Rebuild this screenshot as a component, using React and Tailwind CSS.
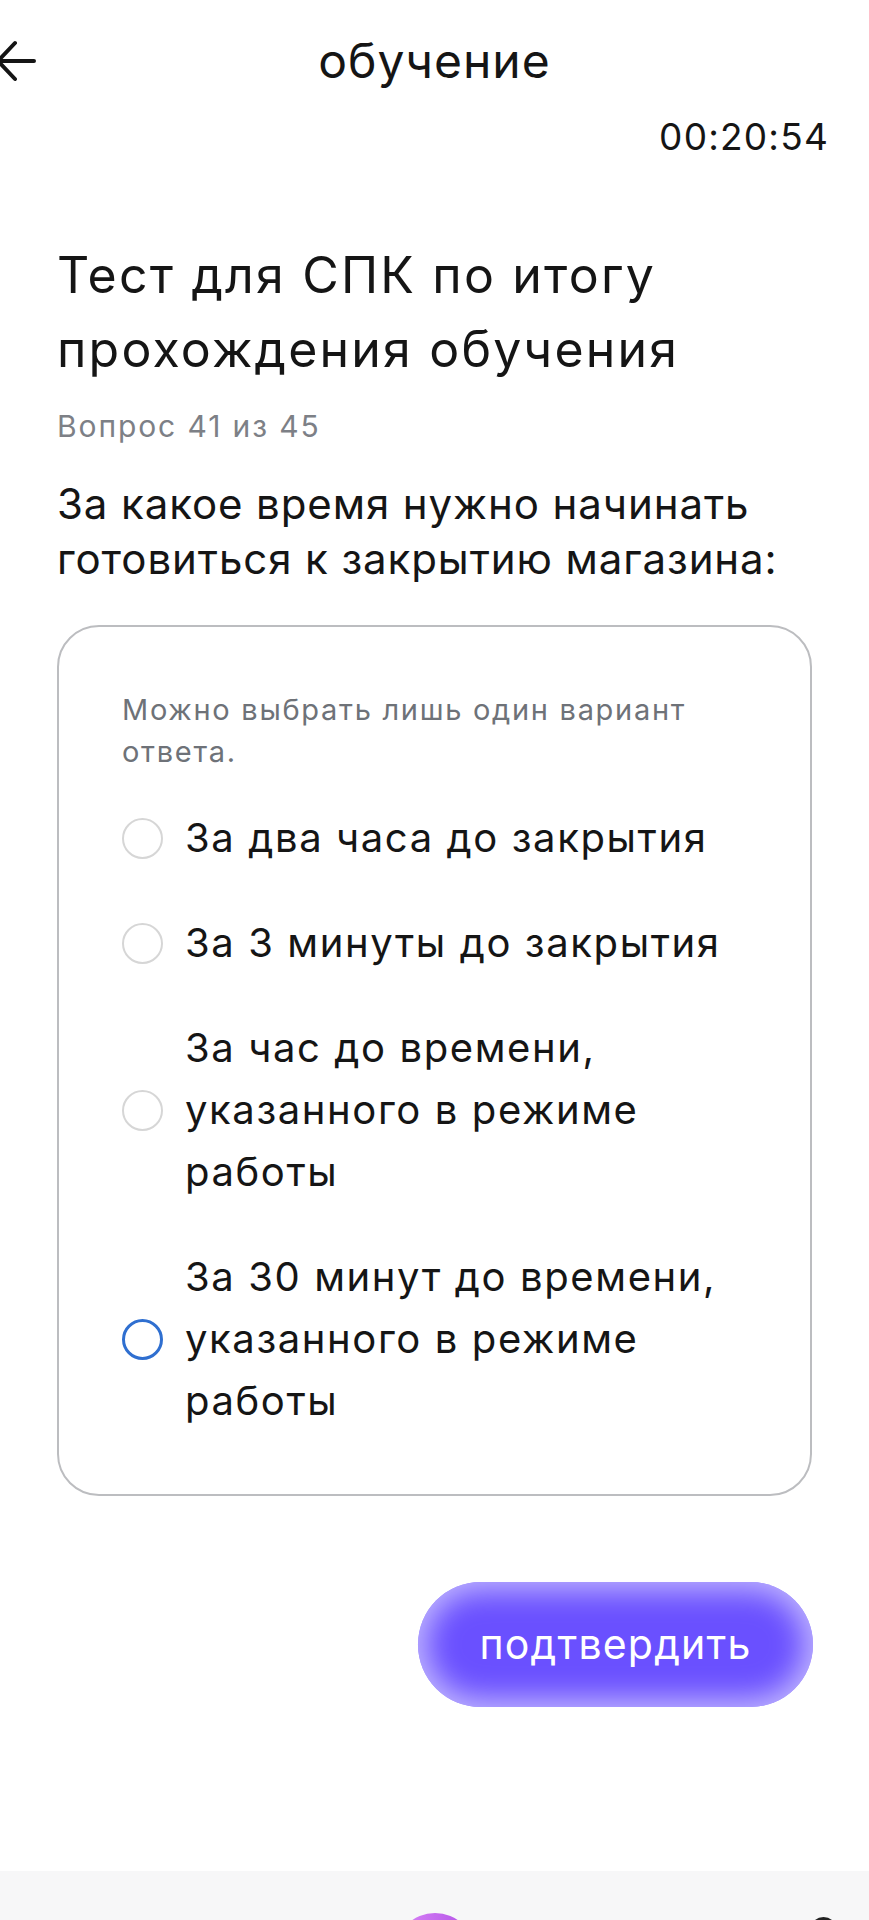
import React from "react";

const font = { fontFamily: "Inter, 'Noto Sans', sans-serif" };

function Radio({ selected }) {
  return (
    <span
      className={
        "shrink-0 w-[41px] h-[41px] rounded-full bg-white " +
        (selected ? "border-[3px] border-[#2f6fd0]" : "border-[2.5px] border-[#d6d6d6]")
      }
    />
  );
}

function Option({ lines, selected }) {
  return (
    <div className="flex items-center gap-[22px]">
      <Radio selected={selected} />
      <div className="text-[40px] leading-[62px] text-[#151515] tracking-[1.6px]">
        {lines.map((l, i) => (
          <div key={i} className="whitespace-nowrap">{l}</div>
        ))}
      </div>
    </div>
  );
}

export default function App() {
  return (
    <div className="w-full h-[1920px] bg-white overflow-hidden flex flex-col" style={font}>
      {/* header */}
      <div className="mt-[33px] h-[56px] grid grid-cols-[1fr_auto_1fr] items-center">
        <div className="flex items-center">
          <svg width="40" height="44" viewBox="-4 0 40 44" className="-ml-[4px]" fill="none">
            <path d="M34 22H-1M15 4L-2 22L15 40" stroke="#151515" strokeWidth="4" strokeLinecap="round" strokeLinejoin="round" />
          </svg>
        </div>
        <div className="text-[48px] leading-[56px] text-[#151515] tracking-[1px]">обучение</div>
        <div />
      </div>

      {/* timer */}
      <div className="mt-[28px] h-[40px] flex justify-end pr-[40px]">
        <span className="text-[37px] leading-[40px] text-[#151515] tracking-[1.2px]">00:20:54</span>
      </div>

      {/* title */}
      <div className="mt-[81px] px-[57px] text-[50px] leading-[74px] text-[#151515] tracking-[2.2px] whitespace-nowrap">
        Тест для СПК по итогу
        <br />
        прохождения обучения
      </div>

      <div className="mt-[22px] px-[57px] text-[30px] leading-[36px] text-[#7d8086] tracking-[1.9px]">Вопрос 41 из 45</div>

      <div className="mt-[32px] px-[57px] text-[42px] leading-[55px] text-[#151515] tracking-[0.9px] whitespace-nowrap">
        За какое время нужно начинать
        <br />
        готовиться к закрытию магазина:
      </div>

      {/* card */}
      <div className="mt-[39px] mx-[57px] border-2 border-[#bcbdc0] rounded-[42px] pt-[62px] pb-[62px] pl-[63px] pr-[30px]">
        <div className="text-[29px] leading-[42px] text-[#6e7278] tracking-[1.7px] whitespace-nowrap">
          Можно выбрать лишь один вариант
          <br />
          ответа.
        </div>
        <div className="mt-[34px] flex flex-col gap-[43px]">
          <Option lines={["За два часа до закрытия"]} />
          <Option lines={["За 3 минуты до закрытия"]} />
          <Option lines={["За час до времени,", "указанного в режиме", "работы"]} />
          <Option lines={["За 30 минут до времени,", "указанного в режиме", "работы"]} selected />
        </div>
      </div>

      {/* button */}
      <div className="mt-[86px] flex justify-end pr-[56px]">
        <button className="w-[395px] h-[125px] rounded-full bg-[#6a50ff] shadow-[inset_0_0_30px_8px_rgba(205,196,255,0.9)] text-white text-[41px] tracking-[1.2px] flex items-center justify-center">
          подтвердить
        </button>
      </div>

      {/* bottom bar */}
      <div className="mt-[164px] h-[120px] bg-[#f7f7f8] flex justify-center relative">
        <div className="mt-[42px] w-[80px] h-[80px] rounded-full bg-gradient-to-r from-[#dc86f7] to-[#b14ee6]" />
        <div className="absolute left-[810px] top-[46px] w-[27px] h-[27px] rounded-full bg-[#222]" />
      </div>
    </div>
  );
}
